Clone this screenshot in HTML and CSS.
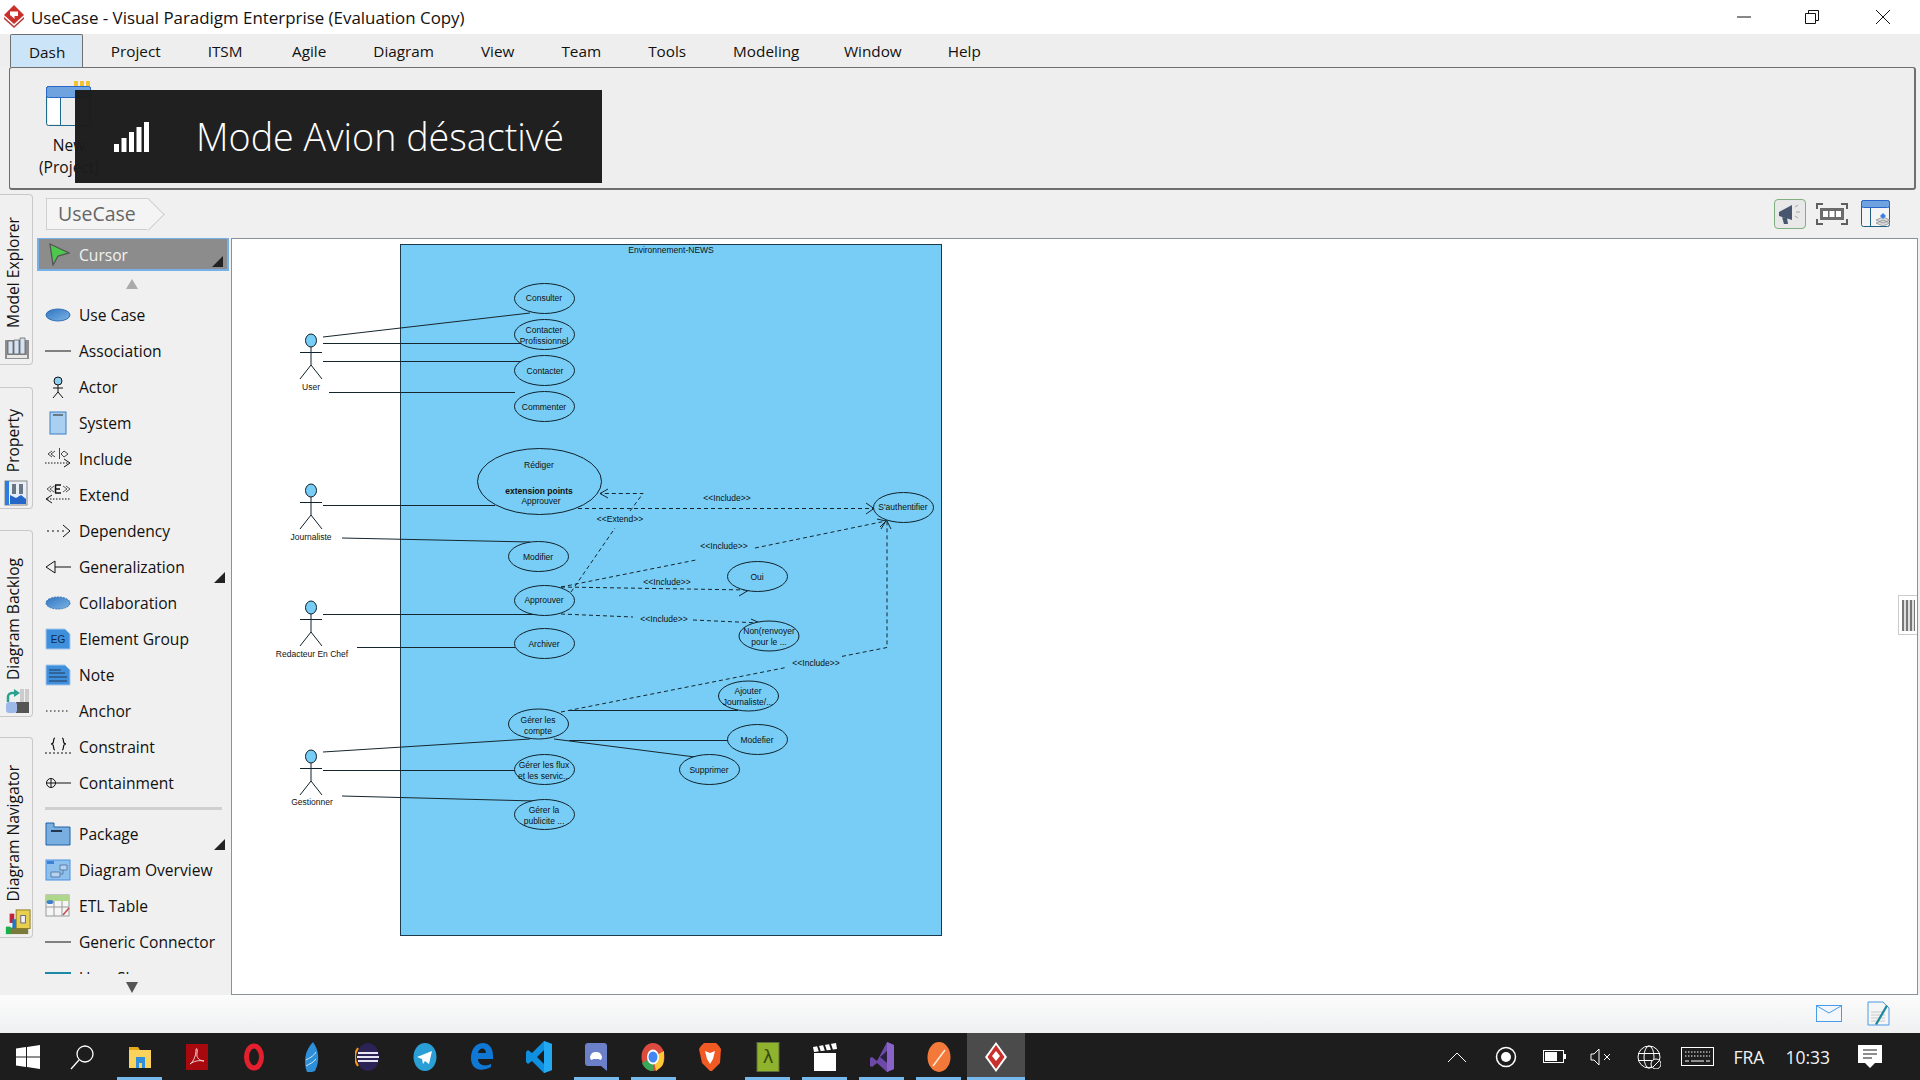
FILE: index.html
```html
<!DOCTYPE html>
<html lang="en">
<head>
    <meta charset="UTF-8">
    <meta name="viewport" content="width=device-width, initial-scale=1.0">
    <title>UseCase - Visual Paradigm Enterprise</title>
    <link rel="stylesheet" href="styles.css">
</head>
<body>
    <header class="titlebar">
        <svg class="app-logo" width="20" height="24" viewBox="0 0 20 24"><path d="M10 0l10 10-10 9L0 10z" fill="#c9302c"/><path d="M0 12l10 9 10-9v2l-10 9-10-9z" fill="#b93a36"/><path d="M6 6.500h8v4.500h-3.500v3L8.500 12 6 10z" fill="#fff"/></svg>
        <span class="app-title">UseCase - Visual Paradigm Enterprise (Evaluation Copy)</span>
        <div class="window-buttons">
            <svg class="win-min" width="16" height="16" viewBox="0 0 16 16"><path d="M1 8h14" stroke="#111" fill="none"/></svg>
            <svg width="16" height="16" viewBox="0 0 16 16"><path d="M1.5 4.5h10v10h-10zM4.5 4.5v-3h10v10h-3" stroke="#111" fill="none"/></svg>
            <svg width="16" height="16" viewBox="0 0 16 16"><path d="M1 1l14 14M15 1L1 15" stroke="#111" fill="none"/></svg>
        </div>
    </header>

    <nav class="menubar">
        <a class="menu-tab active">Dash</a>
        <a class="menu-tab">Project</a>
        <a class="menu-tab">ITSM</a>
        <a class="menu-tab">Agile</a>
        <a class="menu-tab">Diagram</a>
        <a class="menu-tab">View</a>
        <a class="menu-tab">Team</a>
        <a class="menu-tab">Tools</a>
        <a class="menu-tab">Modeling</a>
        <a class="menu-tab">Window</a>
        <a class="menu-tab">Help</a>
    </nav>

    <section class="ribbon">
        <div class="ribbon-button">
            <svg width="46" height="46" viewBox="0 0 46 46">
                <rect x="0.5" y="5.5" width="44" height="39" rx="2" fill="#eee" stroke="#1d6a8a"/>
                <rect x="0.5" y="5.5" width="44" height="11" rx="2" fill="#6fa3e0" stroke="#2a66c8"/>
                <rect x="2" y="17" width="12" height="26" fill="#fff"/>
                <path d="M14.5 17v27" stroke="#1d6a8a"/>
                <path d="M28 0h4v5h-4zM34 0h4v5h-4zM40 0h4v5h-4z" fill="#f1c232"/>
            </svg>
            <span>New<br>(Project)</span>
        </div>
    </section>

    <div class="toast">
        <svg width="35" height="30" viewBox="0 0 35 30"><path d="M0 22h5v8H0zM7.500 16h5v14h-5zM15 10h5v20h-5zM22.500 5h5v25h-5zM30 0h5v30h-5z" fill="#fff"/></svg>
        <span class="toast-text">Mode Avion désactivé</span>
    </div>

    <div class="workspace">
        <aside class="rail">
            <div class="rail-tab tab-explorer">
                <span>Model Explorer</span>
                <svg width="26" height="24" viewBox="0 0 26 24"><rect x="1" y="3" width="24" height="19" fill="#8d8d8d"/><path d="M4 4h5v13H4zM10 3h5v14h-5zM16 1h5v16h-5z" fill="#d5e2f2" stroke="#555" stroke-width=".7"/><path d="M3 18h20v3H3z" fill="#e8e8e8"/></svg>
            </div>
            <div class="rail-tab tab-property">
                <span>Property</span>
                <svg width="24" height="26" viewBox="0 0 24 26"><rect x="1" y="1" width="22" height="24" fill="#e8eef6" stroke="#888"/><rect x="1" y="1" width="4" height="24" fill="#2b7de0"/><path d="M8 4h4v10H8zM15 4h4v10h-4z" fill="#6a7684"/><path d="M6 15l6 3 5-3 5 4v5H6z" fill="#2467c9"/></svg>
            </div>
            <div class="rail-tab tab-backlog">
                <span>Diagram Backlog</span>
                <svg width="26" height="26" viewBox="0 0 26 26"><path d="M16 1h4v24h-4zM21 1h4v24h-4z" fill="#ccc"/><path d="M12 14h13v11H12z" fill="#555"/><rect x="2" y="14" width="11" height="11" rx="3" fill="#9db9e8"/><path d="M4 14V9a4 4 0 0 1 4-4h3" stroke="#2aa08e" stroke-width="2.500" fill="none"/><path d="M10 1l6 4-6 4z" fill="#2aa08e"/></svg>
            </div>
            <div class="rail-tab tab-navigator">
                <span>Diagram Navigator</span>
                <svg width="28" height="28" viewBox="0 0 28 28"><rect x="1" y="20" width="24" height="7" fill="#7a7a3a"/><rect x="1" y="19" width="5" height="8" fill="#18b04a"/><rect x="5" y="5" width="5" height="10" fill="#c0243a"/><rect x="8" y="11" width="5" height="10" fill="#1a78c8"/><rect x="12" y="1" width="15" height="20" fill="#e8cf50" stroke="#8a7a20"/><rect x="17" y="7" width="5" height="8" fill="#eef" stroke="#667"/></svg>
            </div>
        </aside>

        <main class="editor">
            <div class="pathbar">
                <div class="crumb"><span>UseCase</span></div>
                <div class="pathbar-tools">
                    <div class="tool-toggle">
                        <svg width="24" height="22" viewBox="0 0 24 22"><path d="M1 9l13-7v15L1 13z" fill="#47566e"/><path d="M4 14l5 1 1 6H6z" fill="#47566e"/><path d="M17 4l3-2M18 9h4M17 13l3 2" stroke="#9aa" fill="none"/></svg>
                    </div>
                    <svg class="tool-fit" width="32" height="22" viewBox="0 0 32 22"><path d="M1 6V1h6M25 1h6v5M1 16v5h6M25 21h6v-5" stroke="#5f5f5f" stroke-width="2" fill="none"/><rect x="4" y="5" width="24" height="12" fill="#6b6b6b"/><path d="M7 8h5v6H7zM13.500 8h5v6h-5zM20 8h5v6h-5z" fill="#fff"/></svg>
                    <svg class="tool-layout" width="30" height="28" viewBox="0 0 30 28"><rect x=".5" y=".5" width="28" height="26" rx="2" fill="#f4f4f4" stroke="#1d5f80"/><rect x=".5" y=".5" width="28" height="7" rx="2" fill="#6fa3e0" stroke="#2a66c8"/><path d="M9.500 8v19" stroke="#1d5f80"/><path d="M15 20l7-3 7 3-7 3zM15 23l7-3 7 3-7 3z" fill="#d9d9d9" stroke="#888" stroke-width=".7"/><path d="M19 16l3-3 3 3-3 3z" fill="#3b82e0"/></svg>
                </div>
            </div>

            <div class="editor-body">
                <div class="palette">
                    <div class="palette-cursor has-more">
                        <svg width="22" height="24" viewBox="0 0 22 24"><path d="M2 2l19 9-11 3-5 9z" fill="#4cc94c" stroke="#555" stroke-width="1.300"/></svg>
                        <span>Cursor</span>
                    </div>
                    <div class="palette-up"></div>
                    <div class="palette-list">
                        <div class="palette-row">
                            <svg width="26" height="24" viewBox="0 0 26 24"><defs><linearGradient id="blue-fill" x1="0" y1="0" x2="1" y2="1"><stop offset="0" stop-color="#2f74c0"/><stop offset="1" stop-color="#7db4e6"/></linearGradient></defs><ellipse cx="13" cy="12" rx="12" ry="6" fill="url(#blue-fill)" stroke="#2e6fb5"/></svg>
                            <span>Use Case</span>
                        </div>
                        <div class="palette-row">
                            <svg width="26" height="24" viewBox="0 0 26 24"><path d="M0 12h26" stroke="#111" fill="none"/></svg>
                            <span>Association</span>
                        </div>
                        <div class="palette-row">
                            <svg width="26" height="24" viewBox="0 0 26 24"><circle cx="13" cy="6" r="4" fill="#8fd0f0" stroke="#111"/><path d="M13 10v7M8 13h10M13 17l-5 6M13 17l5 6" stroke="#111" fill="none"/></svg>
                            <span>Actor</span>
                        </div>
                        <div class="palette-row">
                            <svg width="26" height="24" viewBox="0 0 26 24"><rect x="5" y="1" width="16" height="22" fill="#a9d0f0" stroke="#3b7fc4"/><path d="M8 4h10" stroke="#222"/></svg>
                            <span>System</span>
                        </div>
                        <div class="palette-row">
                            <svg width="26" height="24" viewBox="0 0 26 24"><path d="M7 4L3 7l4 3M10 4L6 7l4 3M19 4l-3 3 3 3M19 4l4 3-4 3M14.500 1v11" stroke="#333" fill="none" stroke-width=".9"/><path d="M0 16h24" stroke="#111" stroke-dasharray="1.500 1.500"/><path d="M19 12l6 4-6 4" stroke="#111" fill="none"/></svg>
                            <span>Include</span>
                        </div>
                        <div class="palette-row">
                            <svg width="26" height="24" viewBox="0 0 26 24"><path d="M6 3L2 6l4 3M9 3L5 6l4 3M18 3l4 3-4 3M21 3l4 3-4 3" stroke="#333" fill="none" stroke-width=".8"/><path d="M10 2h6M10 6h5M10 10h6M10.500 2v8" stroke="#111" stroke-width="1.500" fill="none"/><path d="M2 16h24" stroke="#111" stroke-dasharray="1.500 1.500"/><path d="M7 12l-6 4 6 4" stroke="#111" fill="none"/></svg>
                            <span>Extend</span>
                        </div>
                        <div class="palette-row">
                            <svg width="26" height="24" viewBox="0 0 26 24"><path d="M2 12h20" stroke="#111" stroke-dasharray="2 3"/><path d="M18 6l7 6-7 6" stroke="#111" fill="none"/></svg>
                            <span>Dependency</span>
                        </div>
                        <div class="palette-row has-more">
                            <svg width="26" height="24" viewBox="0 0 26 24"><path d="M1 12l9-6v12z" fill="#f0f0f0" stroke="#111"/><path d="M10 12h16" stroke="#111"/></svg>
                            <span>Generalization</span>
                        </div>
                        <div class="palette-row">
                            <svg width="26" height="24" viewBox="0 0 26 24"><ellipse cx="13" cy="12" rx="12" ry="6" fill="url(#blue-fill)" stroke="#2e6fb5" stroke-dasharray="2 1"/></svg>
                            <span>Collaboration</span>
                        </div>
                        <div class="palette-row">
                            <svg width="26" height="24" viewBox="0 0 26 24"><path d="M1 2h19l5 5v15H1z" fill="#3e8fdc" stroke="#a8c8ec"/><text class="icon-text" x="13" y="16" text-anchor="middle">EG</text></svg>
                            <span>Element Group</span>
                        </div>
                        <div class="palette-row">
                            <svg width="26" height="24" viewBox="0 0 26 24"><path d="M1 2h19l5 5v15H1z" fill="#3e8fdc" stroke="#a8c8ec"/><path d="M4 7h12M4 10h16M4 14h18M4 18h18" stroke="#24385a"/></svg>
                            <span>Note</span>
                        </div>
                        <div class="palette-row">
                            <svg width="26" height="24" viewBox="0 0 26 24"><path d="M1 12h24" stroke="#111" stroke-dasharray="1.500 2.500"/></svg>
                            <span>Anchor</span>
                        </div>
                        <div class="palette-row">
                            <svg width="26" height="24" viewBox="0 0 26 24"><path d="M10 3c-2 0-1 4-2 5s-1 1-2 1c1 0 1 0 2 1s0 5 2 5M17 3c2 0 1 4 2 5s1 1 2 1c-1 0-1 0-2 1s0 5-2 5" stroke="#111" stroke-width="1.200" fill="none"/><path d="M0 18h26" stroke="#111" stroke-dasharray="2 2"/></svg>
                            <span>Constraint</span>
                        </div>
                        <div class="palette-row">
                            <svg width="26" height="24" viewBox="0 0 26 24"><circle cx="6" cy="12" r="4.500" fill="none" stroke="#111"/><path d="M1.500 12H26M6 7.500v9" stroke="#111" fill="none"/></svg>
                            <span>Containment</span>
                        </div>
                        <div class="palette-sep"></div>
                        <div class="palette-row has-more">
                            <svg width="26" height="24" viewBox="0 0 26 24"><path d="M1 1h8v4h16v18H1z" fill="#78aee0" stroke="#1f63a8"/><path d="M6 9h11" stroke="#23364f" stroke-width="2"/></svg>
                            <span>Package</span>
                        </div>
                        <div class="palette-row">
                            <svg width="26" height="24" viewBox="0 0 26 24"><rect x="1" y="2" width="24" height="20" fill="#8ec0ee" stroke="#4a90dc"/><path d="M2 3h7v3H2z" fill="#3b82d8"/><path d="M6 14h9v5H6zM15 7h7v5h-7z" fill="#b7d3f0" stroke="#5a7fa8"/><path d="M15 16h3v-4" stroke="#5a7fa8" fill="none"/></svg>
                            <span>Diagram Overview</span>
                        </div>
                        <div class="palette-row">
                            <svg width="26" height="24" viewBox="0 0 26 24"><rect x="1" y="1" width="23" height="21" fill="#f5f5f5" stroke="#9a9a9a"/><rect x="1" y="1" width="23" height="6" fill="#aed78c"/><path d="M1 13h23M9 7v15M17 7v15" stroke="#9a9a9a"/><ellipse cx="5" cy="8" rx="3.500" ry="2" fill="#3d80c8"/><path d="M18 21l6-7" stroke="#c84a4a" stroke-width="1.500"/></svg>
                            <span>ETL Table</span>
                        </div>
                        <div class="palette-row">
                            <svg width="26" height="24" viewBox="0 0 26 24"><path d="M0 12h26" stroke="#111" fill="none"/></svg>
                            <span>Generic Connector</span>
                        </div>
                        <div class="palette-row">
                            <svg width="26" height="24" viewBox="0 0 26 24"><rect x="0" y="6" width="26" height="16" fill="#1a8aa8"/></svg>
                            <span>User Shape</span>
                        </div>
                    </div>
                    <div class="palette-down"></div>
                </div>

                <div class="canvas">
                    <svg class="diagram" width="1686" height="755" viewBox="232 239 1686 755">
                        <rect class="boundary" x="400.500" y="244.500" width="541" height="691"/>
                        <text class="lbl" x="671" y="253">Environnement-NEWS</text>

                        <!-- associations -->
                        <path class="solid" d="M323 337L530 313M323 343.500H522M323 361.500H524M329 392.500H515M323 505.500H495M342 538L530 542M323 614.500H548M357 647.500H515M569 710.500H738M569 740.500H728M554 739L695 757M323 752L530 739M323 770.500H515M342 796L535 801"/>

                        <!-- dependencies -->
                        <path class="dash" d="M571 592L615 528M630 511L643 493.500H600M578 508.500H874M561 587L696 560M755 548L886 521M561 587L749 590M561 614L633 617M693 620L760 623M561 712L786 667.500M842 656.400L887 647.500V520"/>
                        <path class="solid" d="M608 489L600 493.500L608 498M866 503L874 508.500L866 514M877 519L886 521L880 527M739 586L749 590L739 596M751 619L760 623L750 628M881 529L886.500 520L891 529"/>
                        <text class="lbl" x="620" y="522">&lt;&lt;Extend&gt;&gt;</text>
                        <text class="lbl" x="727" y="501">&lt;&lt;Include&gt;&gt;</text>
                        <text class="lbl" x="724" y="549">&lt;&lt;Include&gt;&gt;</text>
                        <text class="lbl" x="667" y="585">&lt;&lt;Include&gt;&gt;</text>
                        <text class="lbl" x="664" y="622">&lt;&lt;Include&gt;&gt;</text>
                        <text class="lbl" x="816" y="666">&lt;&lt;Include&gt;&gt;</text>

                        <!-- use cases -->
                        <ellipse class="uc" cx="544.500" cy="298.500" rx="30" ry="15"/>
                        <text class="lbl" x="544" y="301">Consulter</text>
                        <ellipse class="uc" cx="544.500" cy="334.500" rx="30" ry="15"/>
                        <text class="lbl" x="544" y="333">Contacter</text>
                        <text class="lbl" x="544" y="344">Profissionnel</text>
                        <ellipse class="uc" cx="544.500" cy="370.500" rx="30" ry="15"/>
                        <text class="lbl" x="545" y="374">Contacter</text>
                        <ellipse class="uc" cx="544.500" cy="406.500" rx="30" ry="15"/>
                        <text class="lbl" x="544" y="410">Commenter</text>

                        <ellipse class="uc" cx="539.500" cy="481.500" rx="62" ry="33"/>
                        <text class="lbl" x="539" y="468">Rédiger</text>
                        <text class="lbl bold" x="539" y="494">extension points</text>
                        <text class="lbl" x="541" y="504">Approuver</text>

                        <ellipse class="uc" cx="903.500" cy="507.500" rx="30" ry="15"/>
                        <text class="lbl" x="903" y="510">S'authentifier</text>
                        <ellipse class="uc" cx="538.500" cy="556.500" rx="30" ry="15"/>
                        <text class="lbl" x="538" y="560">Modifier</text>
                        <ellipse class="uc" cx="544.500" cy="600.500" rx="30" ry="15"/>
                        <text class="lbl" x="544" y="603">Approuver</text>
                        <ellipse class="uc" cx="757.500" cy="576.500" rx="30" ry="15"/>
                        <text class="lbl" x="757" y="580">Oui</text>
                        <ellipse class="uc" cx="769" cy="636" rx="30" ry="15"/>
                        <text class="lbl" x="769" y="634">Non(renvoyer</text>
                        <text class="lbl" x="769" y="645">pour le ...</text>
                        <ellipse class="uc" cx="544.500" cy="643.500" rx="30" ry="15"/>
                        <text class="lbl" x="544" y="647">Archiver</text>
                        <ellipse class="uc" cx="748.500" cy="696" rx="30" ry="15"/>
                        <text class="lbl" x="748" y="694">Ajouter</text>
                        <text class="lbl" x="748" y="705">Journaliste/...</text>
                        <ellipse class="uc" cx="538.500" cy="724" rx="30" ry="15"/>
                        <text class="lbl" x="538" y="723">Gérer les</text>
                        <text class="lbl" x="538" y="734">compte</text>
                        <ellipse class="uc" cx="757.500" cy="739.500" rx="30" ry="15"/>
                        <text class="lbl" x="757" y="743">Modefier</text>
                        <ellipse class="uc" cx="709.500" cy="769.500" rx="30" ry="15"/>
                        <text class="lbl" x="709" y="773">Supprimer</text>
                        <ellipse class="uc" cx="544.500" cy="769.500" rx="30" ry="15"/>
                        <text class="lbl" x="544" y="768">Gérer les flux</text>
                        <text class="lbl" x="544" y="779">et les servic...</text>
                        <ellipse class="uc" cx="544.500" cy="814.500" rx="30" ry="15"/>
                        <text class="lbl" x="544" y="813">Gérer la</text>
                        <text class="lbl" x="544" y="824">publicite ...</text>

                        <!-- actors -->
                        <g class="actor" transform="translate(311 334)">
                            <ellipse cx="0" cy="6.500" rx="5.500" ry="6.500"/>
                            <path d="M0 13V31M-11 18.500H11M-11 45L0 31L11 45"/>
                        </g>
                        <text class="lbl" x="311" y="390">User</text>
                        <g class="actor" transform="translate(311 484)">
                            <ellipse cx="0" cy="6.500" rx="5.500" ry="6.500"/>
                            <path d="M0 13V31M-11 18.500H11M-11 45L0 31L11 45"/>
                        </g>
                        <text class="lbl" x="311" y="540">Journaliste</text>
                        <g class="actor" transform="translate(311 601)">
                            <ellipse cx="0" cy="6.500" rx="5.500" ry="6.500"/>
                            <path d="M0 13V31M-11 18.500H11M-11 45L0 31L11 45"/>
                        </g>
                        <text class="lbl" x="312" y="657">Redacteur En Chef</text>
                        <g class="actor" transform="translate(311 750)">
                            <ellipse cx="0" cy="6.500" rx="5.500" ry="6.500"/>
                            <path d="M0 13V31M-11 18.500H11M-11 45L0 31L11 45"/>
                        </g>
                        <text class="lbl" x="312" y="805">Gestionner</text>
                    </svg>
                    <div class="grip"></div>
                </div>
            </div>
        </main>
    </div>

    <footer class="statusbar">
        <svg width="26" height="18" viewBox="0 0 26 18"><rect x=".5" y=".5" width="25" height="16" fill="#f3f6fa" stroke="#4a9be8"/><path d="M1 1l12 7 12-7" fill="none" stroke="#4a9be8"/></svg>
        <svg width="24" height="26" viewBox="0 0 24 26"><path d="M1 1h15l6 6v17H1z" fill="#f5f5f5" stroke="#4a9be8"/><path d="M4 11h14M4 14h14M4 17h14M4 20h14" stroke="#c8c8c8"/><path d="M8 23L19 4l2 1L10 24z" fill="#1a8a9a"/></svg>
    </footer>

    <div class="taskbar">
        <div class="task-item win">
            <svg width="24" height="24" viewBox="0 0 24 24"><path d="M0 3.500l10-1.500v9.500H0zM11 2l13-2v11.500H11zM0 12.500h10V22L0 20.500zM11 12.500h13V24l-13-2z" fill="#fff"/></svg>
        </div>
        <div class="task-item search">
            <svg width="26" height="26" viewBox="0 0 26 26"><circle cx="16" cy="10" r="8" fill="none" stroke="#fff" stroke-width="1.300"/><path d="M10 16L2 25" stroke="#fff" stroke-width="1.300"/></svg>
        </div>
        <div class="task-item running">
            <svg width="24" height="24" viewBox="0 0 24 24"><path d="M1 2h9l2 3H1z" fill="#e8a81c"/><path d="M1 5h22v18H1z" fill="#fbd35c"/><path d="M8 12h9v11h-3v-5h-3v5H8z" fill="#2f8fd8"/></svg>
        </div>
        <div class="task-item">
            <svg width="24" height="26" viewBox="0 0 24 26"><rect x="1" y="0" width="22" height="26" fill="#a8090f"/><path d="M5 20c4-3 6-9 6-14 0-3 2-1 1 3-1 5 3 8 7 8-5-1-10 0-14 3z" fill="none" stroke="#f2d0d0"/></svg>
        </div>
        <div class="task-item">
            <svg width="24" height="28" viewBox="0 0 24 28"><ellipse cx="12" cy="14" rx="7.500" ry="11" fill="none" stroke="#e5202e" stroke-width="5"/></svg>
        </div>
        <div class="task-item">
            <svg width="18" height="30" viewBox="0 0 18 30"><path d="M11 0c6 8 7 19 2 29l-3 1H5C1 20 3 8 11 0z" fill="#2d8fd8"/><path d="M4 18c3-2 7-3 10-8M4 24c3-2 7-3 10-7" stroke="#cfe8fa" fill="none"/></svg>
        </div>
        <div class="task-item">
            <svg width="26" height="30" viewBox="0 0 26 30"><ellipse cx="13" cy="15" rx="11" ry="14" fill="#2c2255"/><path d="M3 6C-1 12-1 18 3 24" fill="none" stroke="#f7941e" stroke-width="2"/><path d="M3 11h20M2 15h22M3 19h20" stroke="#e8e6f2" stroke-width="2"/></svg>
        </div>
        <div class="task-item">
            <svg width="26" height="28" viewBox="0 0 26 28"><ellipse cx="13" cy="14" rx="11.500" ry="14" fill="#2a9fd6"/><path d="M5 14l15-6-3 13-4-3-2 3-1-5z" fill="#fff"/></svg>
        </div>
        <div class="task-item">
            <svg width="24" height="28" viewBox="0 0 24 28"><path d="M21 24C10 30 1 26 1 15 1 5 7 0 13 0c6 0 10 5 10 13v3H8c0 6 7 8 13 5zM8 10h8c0-6-7-6-8 0z" fill="#0f78d4"/></svg>
        </div>
        <div class="task-item">
            <svg width="26" height="32" viewBox="0 0 26 32"><path d="M18 0l8 3v26l-8 3L6 20l-4 3-2-2v-10l2-2 4 3zM18 9l-7 7 7 7z" fill="#0f8fe0"/><path d="M18 0l8 3v26l-8 3z" fill="#23a9f2"/></svg>
        </div>
        <div class="task-item running">
            <svg width="22" height="28" viewBox="0 0 22 28"><path d="M3 0h16a3 3 0 0 1 3 3v25l-6-5H3a3 3 0 0 1-3-3V3a3 3 0 0 1 3-3z" fill="#6b80c8"/><path d="M5 14c1-4 3-5 6-5s5 1 6 5c0 2-1 3-2 3l-1-1H8l-1 1c-1 0-2-1-2-3z" fill="#fff"/></svg>
        </div>
        <div class="task-item running">
            <svg width="24" height="28" viewBox="0 0 24 28"><ellipse cx="12" cy="14" rx="11.500" ry="14" fill="#dd4b3e"/><path d="M12 14L1 20c2 5 6 8 11 8z" fill="#3aa757"/><path d="M12 14l11-6c0 8 0 12-2 15l-6 5z" fill="#fcc934"/><ellipse cx="12" cy="14" rx="6" ry="7.500" fill="#fff"/><ellipse cx="12" cy="14" rx="4.500" ry="5.500" fill="#4285f4"/></svg>
        </div>
        <div class="task-item">
            <svg width="22" height="28" viewBox="0 0 22 28"><path d="M5 0h12l3 3 2 3-1 14-8 8-2 0-8-8L0 6l2-3z" fill="#f15a22"/><path d="M6 8l5 2 5-2-2 8-3 5-3-5z" fill="#fff"/></svg>
        </div>
        <div class="task-item running">
            <svg width="24" height="30" viewBox="0 0 24 30"><rect x="1" y="0.500" width="22" height="29" fill="#8fb32c" stroke="#5d6b3a"/><text class="lambda" x="12" y="21" text-anchor="middle">λ</text></svg>
        </div>
        <div class="task-item running">
            <svg width="24" height="28" viewBox="0 0 24 28"><rect x="1" y="10" width="22" height="18" fill="#fff"/><path d="M0 4l23-4 1 6L1 9z" fill="#fff"/><path d="M5 3l2 6M11 2l2 6M17 1l2 6" stroke="#1c1c1c" stroke-width="2"/></svg>
        </div>
        <div class="task-item running">
            <svg width="24" height="30" viewBox="0 0 24 30"><path d="M17 0l7 3v24l-7 3L7 21l-5 4-2-1V16l2-1 5 4z" fill="#6e4aa8"/><path d="M17 9l-7 6 7 6z" fill="#2a2140"/><path d="M17 0l7 3v24l-7 3z" fill="#8a63c8"/></svg>
        </div>
        <div class="task-item running">
            <svg width="24" height="30" viewBox="0 0 24 30"><ellipse cx="12" cy="15" rx="11.500" ry="15" fill="#f2793a"/><path d="M6 24L18 8" stroke="#ffe7d6" stroke-width="1.500"/></svg>
        </div>
        <div class="task-item current">
            <svg width="22" height="30" viewBox="0 0 22 30"><path d="M11 0l11 15-11 15L0 15z" fill="#fff"/><path d="M11 3l8.500 12L11 27 2.500 15z" fill="#c9302c"/><path d="M11 9l4 5-4 5-4-5z" fill="#fff"/></svg>
        </div>

        <div class="tray">
            <svg class="tray-chevron" width="18" height="10" viewBox="0 0 18 10"><path d="M0 10L9 1l9 9" fill="none" stroke="#fff"/></svg>
            <svg class="tray-record" width="22" height="22" viewBox="0 0 22 22"><circle cx="11" cy="11" r="9.500" fill="none" stroke="#fff" stroke-width="1.500"/><circle cx="11" cy="11" r="5" fill="#fff"/></svg>
            <svg class="tray-battery" width="23" height="13" viewBox="0 0 23 13"><rect x=".5" y=".5" width="20" height="12" fill="none" stroke="#fff"/><rect x="2" y="2" width="12" height="9" fill="#fff"/><rect x="21" y="4" width="2" height="5" fill="#fff"/></svg>
            <svg class="tray-sound" width="21" height="18" viewBox="0 0 21 18"><path d="M1 6h3l5-5v16l-5-5H1z" fill="none" stroke="#fff"/><path d="M14 6l6 6M20 6l-6 6" stroke="#fff"/></svg>
            <svg class="tray-globe" width="24" height="24" viewBox="0 0 24 24"><circle cx="12" cy="12" r="11" fill="none" stroke="#fff"/><ellipse cx="12" cy="12" rx="5" ry="11" fill="none" stroke="#fff"/><path d="M1 8.500h22M1 15.500h22" stroke="#fff"/><circle cx="19" cy="19" r="5" fill="#1c1c1c" stroke="#fff"/><path d="M16 22l6-6" stroke="#fff"/></svg>
            <svg class="tray-keyboard" width="33" height="19" viewBox="0 0 33 19"><rect x=".5" y=".5" width="32" height="18" fill="none" stroke="#fff"/><path d="M4 5h25M4 9h25" stroke="#fff" stroke-dasharray="1.500 1.500"/><path d="M4 14h4M10 14h13M25 14h4" stroke="#fff"/></svg>
            <span class="tray-lang">FRA</span>
            <span class="tray-clock">10:33</span>
            <svg class="tray-notify" width="24" height="24" viewBox="0 0 24 24"><path d="M0 0h24v18h-7l-5 5-5-5H0z" fill="#fff"/><path d="M5 5h14M5 9h14M5 13h9" stroke="#1c1c1c"/></svg>
        </div>
    </div>
</body>
</html>
```

FILE: styles.css
```css
* {
    box-sizing: border-box;
}

html, body {
    margin: 0;
    padding: 0;
}

body {
    width: 1920px;
    height: 1080px;
    overflow: hidden;
    position: relative;
    background-color: #f0f0f0;
    font-family: "Open Sans", "Noto Sans", sans-serif;
    font-size: 15.6px;
    color: #111;
}

svg {
    display: block;
    flex-shrink: 0;
}

/* title bar */
.titlebar {
    height: 34px;
    background-color: #fff;
    display: flex;
    align-items: center;
    padding-left: 4px;
}

.app-title {
    margin-left: 7px;
    font-size: 16.9px;
}

.window-buttons {
    margin-left: auto;
    display: flex;
    gap: 55px;
    padding-right: 29px;
}

.win-min {
    margin-right: -3px;
}

/* menu tabs */
.menubar {
    height: 33px;
    padding-left: 10px;
    display: flex;
    align-items: flex-end;
    background-color: #eee;
    font-size: 15.300px;
}

.menu-tab {
    height: 30px;
    padding: 4px 23.500px 0;
}

.menu-tab:nth-child(4) {
    margin-left: 2.500px;
}

.menu-tab:nth-child(10) {
    margin-left: -2.500px;
}

.menu-tab:nth-child(11) {
    margin-left: -1px;
}

.menu-tab.active {
    height: 33px;
    padding: 7px 17px 0 18px;
    margin-right: 4px;
    background-color: #cce4f7;
    border: 1px solid #6f6f6f;
    border-bottom: none;
    border-radius: 2px 2px 0 0;
}

.ribbon {
    height: 123px;
    margin: 0 4px 0 9px;
    background-color: #eee;
    border: 2px solid #6f6f6f;
    border-top-width: 1px;
    border-left-width: 1px;
    border-radius: 3px;
    padding: 13px 0 0 36px;
}

.ribbon-button {
    width: 46px;
    display: flex;
    flex-direction: column;
    align-items: center;
    text-align: center;
    line-height: 22px;
}

.ribbon-button span {
    margin-top: 7px;
    white-space: nowrap;
}

.toast {
    position: absolute;
    left: 75px;
    top: 90px;
    width: 527px;
    height: 93px;
    background-color: rgba(28, 28, 28, 0.98);
    display: flex;
    align-items: center;
    padding-left: 39px;
    color: #fff;
}

.toast-text {
    margin-left: 47px;
    font-size: 37.700px;
    font-weight: 300;
    white-space: nowrap;
}

/* main area */
.workspace {
    height: 805px;
    display: flex;
}

.rail {
    width: 33px;
    padding-top: 4px;
    flex-shrink: 0;
}

.rail-tab {
    width: 33px;
    display: flex;
    flex-direction: column;
    align-items: flex-start;
    justify-content: flex-end;
    border: 1px solid #c8c8c8;
    border-left: none;
    border-radius: 0 4px 4px 0;
    padding-left: 3px;
}

.rail-tab span {
    writing-mode: vertical-rl;
    transform: rotate(180deg);
    white-space: nowrap;
    line-height: 20px;
    width: 20px;
    margin-bottom: 8px;
}

.rail-tab svg {
    height: 26px;
    margin-bottom: 2px;
    margin-left: 1px;
}

.tab-explorer {
    height: 171px;
    margin-bottom: 22px;
}

.tab-property {
    height: 122px;
    margin-bottom: 21px;
}

.tab-backlog {
    height: 187px;
    margin-bottom: 20px;
}

.tab-navigator {
    height: 201px;
}

.editor {
    flex: 1;
    min-width: 0;
    padding-left: 4px;
    display: flex;
    flex-direction: column;
}

.pathbar {
    height: 48px;
    display: flex;
    align-items: flex-start;
    padding: 8px 0 0 9px;
}

.crumb {
    position: relative;
    height: 32px;
    width: 103px;
    padding-left: 11px;
    line-height: 30px;
    font-size: 19.500px;
    color: #666;
    background-color: #f4f4f4;
    border: 1px solid #cfcfcf;
    border-right: none;
}

.crumb span {
    position: relative;
    z-index: 1;
}

.crumb::after {
    content: "";
    position: absolute;
    right: -11px;
    top: 4px;
    width: 22px;
    height: 22px;
    background-color: #f4f4f4;
    border-top: 1px solid #cfcfcf;
    border-right: 1px solid #cfcfcf;
    transform: rotate(45deg);
}

.pathbar-tools {
    margin-left: auto;
    padding-right: 29px;
    display: flex;
    align-items: center;
    gap: 11px;
    height: 32px;
}

.tool-toggle {
    width: 32px;
    height: 30px;
    border: 1px solid #7fae7f;
    border-radius: 4px;
    background-color: #e8e8e8;
    display: flex;
    align-items: center;
    justify-content: center;
}

.tool-fit {
    margin-left: -1px;
}

.tool-layout {
    margin-left: 2px;
}

.editor-body {
    flex: 1;
    min-height: 0;
    display: flex;
}

/* palette */
.palette {
    width: 192px;
    flex-shrink: 0;
    position: relative;
}

.palette-cursor {
    height: 33px;
    background-color: #8c8c8c;
    border: 1px solid #75b0e8;
    border-width: 1px 2px 2px 2px;
    display: flex;
    align-items: center;
    padding-left: 9px;
    gap: 9px;
    color: #f2f2f2;
    position: relative;
}

.palette-cursor span {
    padding-top: 1px;
}

.palette-up {
    height: 0;
    width: 0;
    margin: 8px auto 0;
    border: 6px solid transparent;
    border-bottom: 10px solid #aaa;
    border-top: none;
    position: relative;
    left: -1px;
}

.palette-list {
    height: 677px;
    margin-top: 8px;
    overflow: hidden;
}

.palette-row {
    height: 36px;
    display: flex;
    align-items: center;
    padding-left: 8px;
    gap: 8px;
    position: relative;
}

.palette-sep {
    height: 3px;
    margin: 6px 7px 6px 8px;
    background-color: #d0d0d0;
}

.palette-down {
    width: 0;
    height: 0;
    margin: 8px auto 0;
    border: 6px solid transparent;
    border-top: 11px solid #555;
    border-bottom: none;
    position: relative;
    left: -1px;
}

.has-more::after {
    content: "";
    position: absolute;
    right: 4px;
    bottom: 2px;
    width: 0;
    height: 0;
    border-left: 11px solid transparent;
    border-bottom: 11px solid #222;
}

.icon-text {
    font-family: "Liberation Sans", sans-serif;
    font-size: 10px;
    fill: #10294a;
}

.lambda {
    font-family: "DejaVu Sans", sans-serif;
    font-size: 18px;
    fill: #3a4a10;
}

/* diagram */
.canvas {
    flex: 1;
    min-width: 0;
    margin-left: 2px;
    margin-right: 2px;
    height: 757px;
    background-color: #fff;
    border: 1px solid #8a9299;
    position: relative;
    overflow: hidden;
}

.diagram {
    position: absolute;
    left: 0;
    top: 0;
}

.boundary {
    fill: #77cdf5;
    stroke: #1c3a4a;
    stroke-width: 1;
}

.uc {
    fill: #77cdf5;
    stroke: #10222c;
    stroke-width: 1;
}

.solid {
    fill: none;
    stroke: #16262e;
    stroke-width: 1;
}

.dash {
    fill: none;
    stroke: #16262e;
    stroke-width: 1;
    stroke-dasharray: 4 3;
}

.lbl {
    font-family: "Liberation Sans", sans-serif;
    font-size: 8.500px;
    text-anchor: middle;
    fill: #111;
}

.lbl.bold {
    font-weight: bold;
}

.actor {
    fill: none;
    stroke: #10222c;
    stroke-width: 1;
}

.actor ellipse {
    fill: #77cdf5;
}

.grip {
    position: absolute;
    right: 0;
    top: 356px;
    width: 19px;
    height: 40px;
    background-color: #dedede;
    border: 1px solid #ccc;
    border-right: none;
    background-image: repeating-linear-gradient(90deg, #777 0 2px, transparent 2px 4px);
    background-origin: content-box;
    background-clip: content-box;
    padding: 4px 2px 3px 3px;
}

/* status bar */
.statusbar {
    height: 38px;
    background: linear-gradient(#fcfcfc, #eff0f1);
    display: flex;
    align-items: center;
    justify-content: flex-end;
    gap: 25px;
    padding-right: 29px;
}

/* taskbar */
.taskbar {
    height: 47px;
    background-color: #1d1d1d;
    display: flex;
    align-items: stretch;
    color: #fff;
}

.task-item {
    width: 57.100px;
    display: flex;
    align-items: center;
    justify-content: center;
    position: relative;
}

.task-item.win {
    width: 55px;
}

.task-item.search {
    width: 56px;
}

.task-item.search svg {
    margin-left: -3px;
}

.task-item.running::after,
.task-item.current::after {
    content: "";
    position: absolute;
    left: 6px;
    right: 6px;
    bottom: 0;
    height: 3px;
    background-color: #76b9ed;
}

.task-item.current {
    background-color: #4b4b4b;
}

.task-item.current::after {
    left: 0;
    right: 0;
}

.tray {
    margin-left: auto;
    display: flex;
    align-items: center;
    padding-right: 38px;
    font-size: 17.500px;
    color: #f2f2f2;
}

.tray-chevron {
    margin-right: 29px;
}

.tray-record {
    margin-right: 26px;
}

.tray-battery {
    margin-right: 24px;
}

.tray-sound {
    margin-right: 26px;
}

.tray-globe {
    margin-right: 20px;
}

.tray-keyboard {
    margin-right: 19px;
}

.tray-lang {
    margin-right: 21px;
}

.tray-clock {
    margin-right: 28px;
}
```
